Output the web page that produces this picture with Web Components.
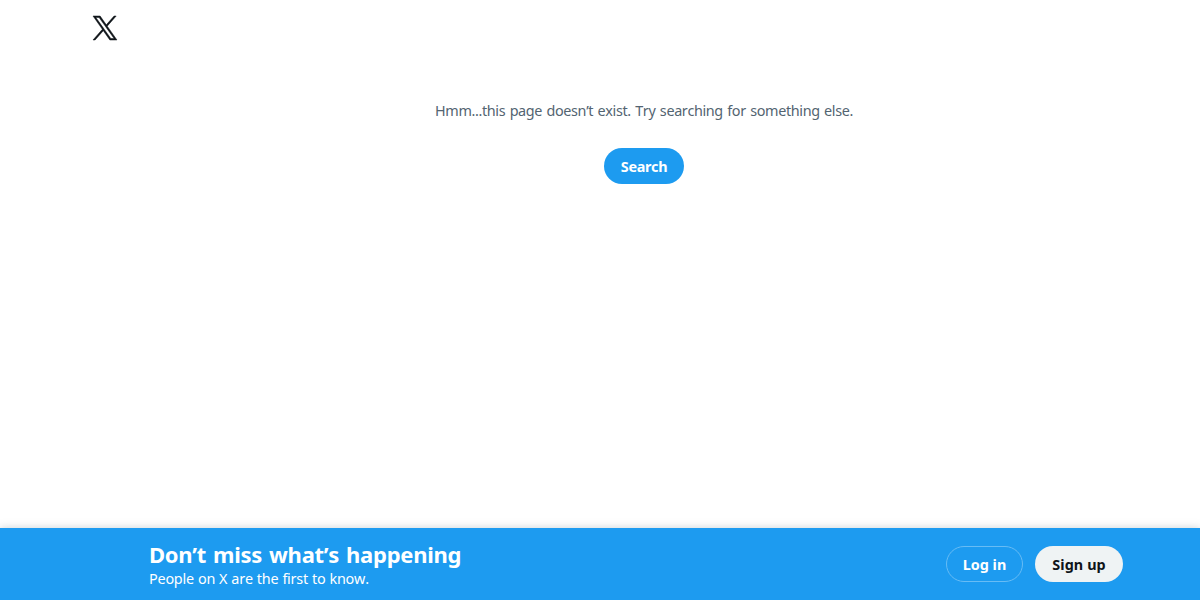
<!DOCTYPE html>
<html lang="en">
<head>
<meta charset="utf-8">
<title>Page not found / X</title>
<style>
  body {
    margin: 0;
    background-color: #fff;
    font-family: "Noto Sans", "Open Sans", sans-serif;
    font-kerning: none;
  }
</style>
</head>
<body>

<not-found-page>
  <x-logo slot="logo"></x-logo>
  <error-message slot="main">
    Hmm...this page doesn’t exist. Try searching for something else.
    <pill-button slot="action" kind="primary">Search</pill-button>
  </error-message>
  <signup-bar slot="bottom">
    <span slot="title">Don’t miss what’s happening</span>
    <span slot="text">People on X are the first to know.</span>
    <pill-button slot="actions" kind="outline">Log in</pill-button>
    <pill-button slot="actions" kind="light">Sign up</pill-button>
  </signup-bar>
</not-found-page>

<script>
class XLogo extends HTMLElement {

    constructor(){
        super();
        this.attachShadow({mode: 'open'});
    }

    connectedCallback(){
        this.shadowRoot.innerHTML=`
        <style>
          :host { display: block; color: #0f1419; }
          svg { display: block; width: 24px; height: 24px; overflow: visible; }
        </style>
        <svg viewBox="0 0 24 24" fill="currentColor" stroke="currentColor" stroke-width="0.5" aria-label="X">
          <path d="M14.258 10.152L23.176 0h-2.113l-7.747 8.813L7.133 0H0l9.352 13.328L0 23.973h2.113l8.176-9.309 6.531 9.309h7.133zm-2.895 3.293l-.949-1.328L2.875 1.56h3.246l6.086 8.523.945 1.328 7.91 11.078h-3.246z"/>
        </svg>
        `;
    }
}

class PillButton extends HTMLElement {

    constructor(){
        super();
        this.attachShadow({mode: 'open'});
    }

    connectedCallback(){
        this.shadowRoot.innerHTML=`
        <style>
          :host { display: inline-block; }

          button {
            box-sizing: border-box;
            display: flex;
            align-items: center;
            justify-content: center;
            width: 100%;
            height: 36px;
            padding: 1px 0 0;
            border: 1px solid transparent;
            border-radius: 18px;
            font: 700 14.4px/20px "Noto Sans", "Open Sans", sans-serif;
            letter-spacing: var(--spacing, 0);
            white-space: nowrap;
            cursor: pointer;
          }

          :host([kind="primary"]) { width: 80px; --spacing: -0.25px; }
          :host([kind="outline"]) { width: 77px; --spacing: 0; }
          :host([kind="light"]) { width: 88px; --spacing: 0.1px; }

          :host([kind="primary"]) button { background-color: #1d9bf0; color: #fff; }
          :host([kind="outline"]) button { background-color: transparent; border-color: #67bcf5; color: #fff; }
          :host([kind="light"]) button { background-color: #eff3f4; color: #0f1419; }
        </style>
        <button type="button"><slot></slot></button>
        `;
    }
}

class ErrorMessage extends HTMLElement {

    constructor(){
        super();
        this.attachShadow({mode: 'open'});
    }

    connectedCallback(){
        this.shadowRoot.innerHTML=`
        <style>
          :host {
            display: flex;
            flex-direction: column;
            align-items: center;
            gap: 27px;
          }

          p {
            margin: 0;
            color: #536471;
            font-size: 14.4px;
            line-height: 20px;
            letter-spacing: -0.37px;
            word-spacing: 1.1px;
            white-space: nowrap;
          }
        </style>
        <p><slot></slot></p>
        <slot name="action"></slot>
        `;
    }
}

class SignupBar extends HTMLElement {

    constructor(){
        super();
        this.attachShadow({mode: 'open'});
    }

    connectedCallback(){
        this.shadowRoot.innerHTML=`
        <style>
          :host {
            box-sizing: border-box;
            display: flex;
            justify-content: space-between;
            align-items: center;
            height: 72px;
            padding: 0 77px 0 149px;
            background-color: #1d9bf0;
            box-shadow: 0 0 8px rgba(101, 119, 134, 0.35);
            color: #fff;
          }

          .text, .actions { display: flex; }
          .text { flex-direction: column; align-items: flex-start; padding-top: 1px; white-space: nowrap; }
          .actions { gap: 12px; }

          .title {
            font-size: 22px;
            font-weight: 700;
            line-height: 27px;
            padding-bottom: 1px;
            letter-spacing: -0.27px;
            word-spacing: 1.5px;
          }

          .sub {
            font-size: 14.4px;
            line-height: 20px;
            letter-spacing: -0.22px;
            word-spacing: 0.5px;
          }
        </style>
        <div class="text">
          <div class="title"><slot name="title"></slot></div>
          <div class="sub"><slot name="text"></slot></div>
        </div>
        <div class="actions"><slot name="actions"></slot></div>
        `;
    }
}

class NotFoundPage extends HTMLElement {

    constructor(){
        super();
        this.attachShadow({mode: 'open'});
    }

    connectedCallback(){
        this.shadowRoot.innerHTML=`
        <style>
          :host {
            display: flex;
            flex-direction: column;
            height: 100vh;
            overflow: hidden;
          }

          header { padding: 16px 0 0 93px; }
          main { flex: 1; padding: 61px 0 0 88px; }
        </style>
        <header><slot name="logo"></slot></header>
        <main><slot name="main"></slot></main>
        <slot name="bottom"></slot>
        `;
    }
}

customElements.define('x-logo', XLogo)
customElements.define('pill-button', PillButton)
customElements.define('error-message', ErrorMessage)
customElements.define('signup-bar', SignupBar)
customElements.define('not-found-page', NotFoundPage)
</script>
</body>
</html>
